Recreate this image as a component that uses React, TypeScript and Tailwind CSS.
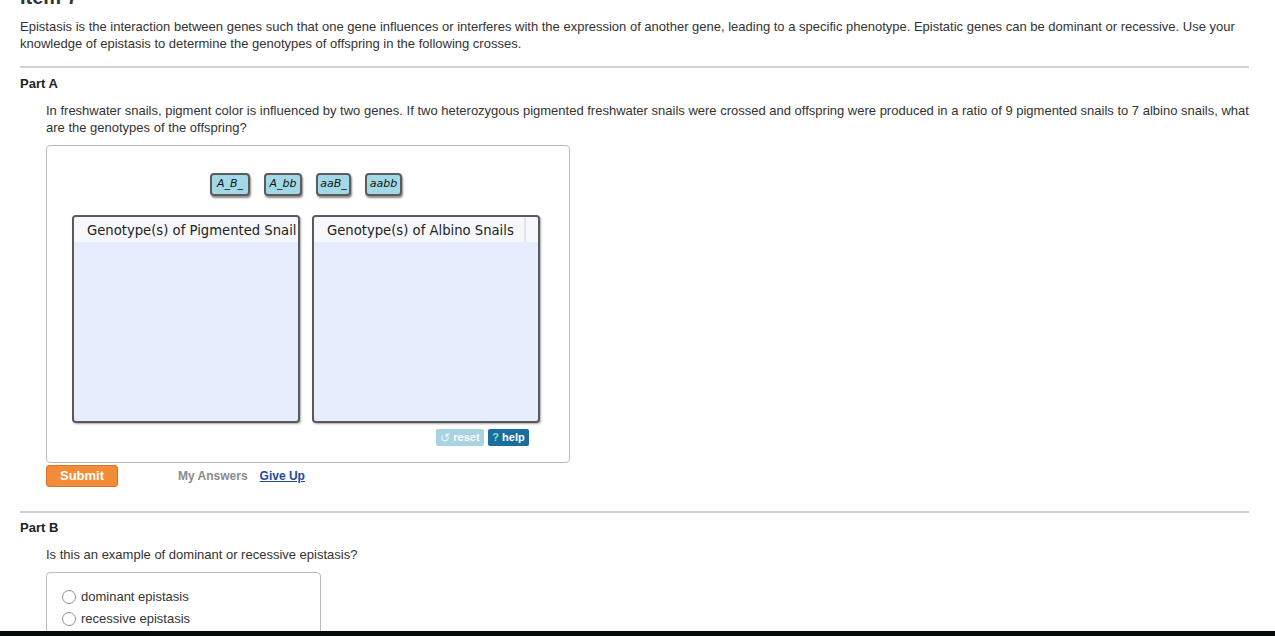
const chips = [
  { label: "A_B_", w: "w-[40px]" },
  { label: "A_bb", w: "w-[38px]" },
  { label: "aaB_", w: "w-[35px]" },
  { label: "aabb", w: "w-[37px]" },
];

const DropZone = ({ title, divider }: { title: string; divider?: boolean }) => (
  <div className="flex h-[208px] w-[228px] flex-col overflow-hidden rounded-[4px] border-2 border-[#5a5a5a] bg-[#e6edfc] shadow-[1px_1px_2px_rgba(0,0,0,0.35)]">
    <div className="flex h-[25px] items-stretch bg-[#f6f8fe]">
      <span
        className={`flex items-center whitespace-nowrap pl-[13px] pr-[10px] pt-[3px] leading-none text-[#222] ${
          divider ? "border-r-2 border-[#dfe5f0]" : ""
        }`}
        style={{ fontFamily: '"DejaVu Sans", Verdana, sans-serif', fontSize: 13.2 }}
      >
        {title}
      </span>
    </div>
  </div>
);

export default function App() {
  return (
    <div
      className="relative h-[636px] w-[1275px] overflow-hidden bg-white text-[#333]"
      style={{ fontFamily: '"Liberation Sans", Arial, sans-serif' }}
    >
      <div className="px-[20px] pr-[26px]">
        <h2 className="-mt-[14px] text-[20px] font-bold leading-[22px] text-[#333]">Item 7</h2>

        <p className="mt-[10px] text-[13px] leading-[17px]">
          Epistasis is the interaction between genes such that one gene influences or interferes with the expression of another gene, leading to a specific phenotype. Epistatic genes can be dominant or recessive. Use your knowledge of epistasis to determine the genotypes of offspring in the following crosses.
        </p>

        <div className="mt-[14px] h-[2px] bg-[#d0d0d0]" />

        <h3 className="mt-[8px] text-[13px] font-bold leading-[16px] text-[#222]">Part A</h3>

        <div className="pl-[26px]">
          <p className="mt-[10px] text-[13px] leading-[17px]">
            In freshwater snails, pigment color is influenced by two genes. If two heterozygous pigmented freshwater snails were crossed and offspring were produced in a ratio of 9 pigmented snails to 7 albino snails, what are the genotypes of the offspring?
          </p>

          <div className="mt-[9px] h-[318px] w-[524px] rounded-[4px] border border-[#bbbbbb] px-[25px] pt-[27px]">
            <div className="flex justify-center gap-[14px] pr-[4px]">
              {chips.map((c) => (
                <div
                  key={c.label}
                  className={`flex h-[23px] ${c.w} items-center justify-center rounded-[4px] border-2 border-[#5c5c5c] bg-[#a3d9e6] italic text-[#111] shadow-[1px_2px_2px_rgba(0,0,0,0.45)]`}
                  style={{ fontFamily: '"DejaVu Sans", Verdana, sans-serif', fontSize: 11 }}
                >
                  {c.label}
                </div>
              ))}
            </div>

            <div className="mt-[19px] flex gap-[12px]">
              <DropZone title="Genotype(s) of Pigmented Snail" />
              <DropZone title="Genotype(s) of Albino Snails" divider />
            </div>

            <div className="mt-[6px] flex justify-end gap-[4px] pr-[15px]">
              <div className="flex h-[17px] w-[48px] items-center justify-center gap-[3px] rounded-[2px] bg-[#a8d3e3] text-[11px] font-bold text-white">
                <span className="text-[12px] font-normal text-[#e8f6fb]">↺</span>
                reset
              </div>
              <div className="flex h-[17px] w-[41px] items-center justify-center gap-[3px] rounded-[2px] bg-[#1b6d9e] text-[11px] font-bold text-white">
                <span className="text-[#7fe0c0]">?</span>
                help
              </div>
            </div>
          </div>

          <div className="mt-[2px] flex items-center">
            <button className="h-[22px] w-[72px] rounded-[3px] border border-[#d9752a] bg-[#f28c38] text-[13px] font-bold text-white">
              Submit
            </button>
            <span className="ml-[60px] text-[12px] font-bold text-[#8a8a8a]">My Answers</span>
            <span className="ml-[12px] text-[12px] font-bold text-[#1c4a9c] underline">Give Up</span>
          </div>
        </div>

        <div className="mt-[24px] h-[2px] bg-[#d0d0d0]" />

        <h3 className="mt-[7px] text-[13px] font-bold leading-[16px] text-[#222]">Part B</h3>

        <div className="pl-[26px]">
          <p className="mt-[10px] text-[13px] leading-[17px]">Is this an example of dominant or recessive epistasis?</p>

          <div className="mt-[9px] h-[80px] w-[275px] rounded-[4px] border border-[#bbbbbb] px-[15px] pt-[13px]">
            {["dominant epistasis", "recessive epistasis"].map((o) => (
              <label key={o} className="flex h-[22px] items-center gap-[5px] text-[13px] text-[#333]">
                <span className="h-[14px] w-[14px] rounded-full border border-[#8f8f8f] bg-white" />
                {o}
              </label>
            ))}
          </div>
        </div>
      </div>

      <div className="absolute bottom-0 left-0 h-[5px] w-full bg-[#050b08]" />
    </div>
  );
}
